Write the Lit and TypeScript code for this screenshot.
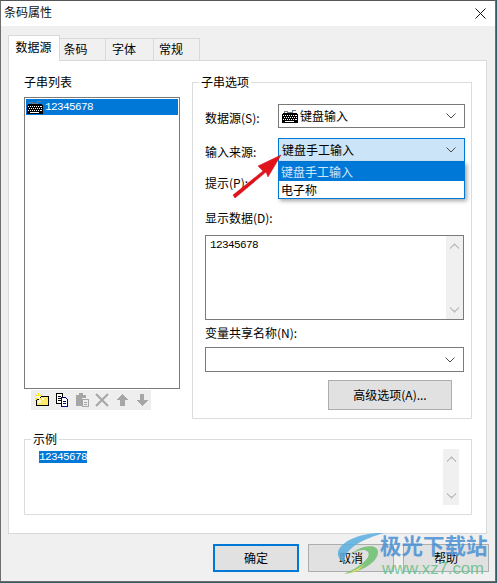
import { LitElement, html, css, svg } from "lit";
import { customElement } from "lit/decorators.js";

const keyboard = svg`<svg class="kb" width="16" height="14" viewBox="0 0 16 14" shape-rendering="crispEdges">
  <path d="M2 4V2h3v1h5V1h4" fill="none" stroke="#6f7d8c" stroke-width="1"/>
  <path d="M1 4h14v1h1v9H0V5h1z" fill="#000"/>
  <path d="M1 6h1v1H1zM3 6h1v1H3zM5 6h1v1H5zM7 6h1v1H7zM9 6h1v1H9zM11 6h1v1h-1zM13 6h2v1h-2zM2 8h1v1H2zM4 8h1v1H4zM6 8h1v1H6zM8 8h1v1H8zM10 8h1v1h-1zM12 8h1v1h-1zM14 8h1v1h-1zM1 10h1v1H1zM3 10h1v1H3zM5 10h1v1H5zM7 10h1v1H7zM9 10h1v1H9zM11 10h1v1h-1zM13 10h2v1h-2zM3 12h9v1H3z" fill="#fff"/>
</svg>`;

const chevron = svg`<svg class="chev" width="10" height="6" viewBox="0 0 10 6"><path d="M0.5 0.5 5 5 9.5 0.5" fill="none" stroke="#4a4a4a" stroke-width="1"/></svg>`;

const sbUp = svg`<svg width="9" height="6" viewBox="0 0 9 6" shape-rendering="crispEdges"><path d="M4 0h1v1h1v1h1v1h1v1h1v2H8V5H7V4H6V3H3v1H2v1H1v1H0V4h1V3h1V2h1V1h1z" fill="#c4c4c4"/></svg>`;
const sbDown = svg`<svg width="9" height="6" viewBox="0 0 9 6" shape-rendering="crispEdges"><path d="M0 0h1v1h1v1h1v1h3V2h1V1h1V0h1v2H8v1H7v1H6v1H5v1H4V5H3V4H2V3H1V2H0z" fill="#c4c4c4"/></svg>`;

@customElement("app-root")
export class AppRoot extends LitElement {
  static styles = css`
    :host {
      display: block;
      width: 497px;
      height: 583px;
      overflow: hidden;
      position: relative;
      background: #2f5f66;
      font-family: "Noto Sans CJK SC", "Liberation Sans", sans-serif;
      font-size: 12px;
      line-height: 16px;
      color: #000;
    }
    .win {
      box-sizing: border-box;
      width: 496px;
      height: 582px;
      background: #f0f0f0;
      border: 1px solid #6e6e6e;
      border-top-color: #555;
      display: flex;
      flex-direction: column;
    }
    .title {
      height: 25px;
      flex: none;
      background: #fff;
      display: flex;
      align-items: center;
      justify-content: space-between;
      padding: 0 9px 0 3px;
      font-size: 12px;
      color: #111;
    }
    .title span { padding-bottom: 3px; }
    .close { display: block; }
    .tabs {
      display: flex;
      align-items: flex-end;
      height: 25px;
      margin: 9px 0 0 7px;
      flex: none;
      position: relative;
      z-index: 1;
    }
    .tab {
      box-sizing: border-box;
      height: 22px;
      border: 1px solid #d9d9d9;
      border-bottom: none;
      border-left: none;
      display: flex;
      align-items: center;
      justify-content: center;
      padding-bottom: 2px;
      background: #f0f0f0;
    }
    .tab.active {
      width: 52px;
      height: 26px;
      background: #fff;
      border-left: 1px solid #d9d9d9;
      padding: 0 1px 4px 0;
      margin-bottom: -1px;
    }
    .tab.t1 { width: 46px; padding-right: 14px; }
    .tab.t2 { width: 48px; padding-right: 11px; }
    .tab.t3 { width: 46px; padding-right: 11px; }
    .panel {
      box-sizing: border-box;
      width: 479px;
      height: 474px;
      margin-left: 7px;
      background: #fff;
      border: 1px solid #d9d9d9;
      padding: 14px 14px 0 15px;
      flex: none;
    }
    .top {
      display: flex;
      gap: 12px;
      height: 344px;
    }
    .left { width: 156px; flex: none; }
    .left .cap { height: 23px; margin-top: -1px; }
    .list {
      box-sizing: border-box;
      height: 292px;
      border: 1px solid #7a7a7a;
      padding: 1px;
    }
    .row {
      height: 16px;
      background: #0078d7;
      color: #fff;
      display: flex;
      align-items: center;
      gap: 2px;
      padding-left: 1px;
    }
    .mono {
      font-family: "Liberation Mono", "DejaVu Sans Mono", monospace;
      font-size: 11px;
      letter-spacing: -0.6px;
    }
    .toolbar {
      margin: 1px 0 0 7px;
      width: 120px;
      height: 20px;
      background: #eeeeee;
      display: flex;
      align-items: center;
      gap: 4px;
      padding-left: 3px;
      box-sizing: border-box;
    }
    .toolbar svg { display: block; flex: none; }
    fieldset {
      margin: 0;
      padding: 0;
      border: 1px solid #dcdcdc;
      min-width: 0;
    }
    legend {
      padding: 0 2px;
      font-size: 12px;
      line-height: 16px;
    }
    .opts legend { margin-left: -6px; }
    .sample legend { margin-left: -8px; }
    .opts {
      box-sizing: border-box;
      width: 281px;
      height: 345px;
      margin-top: -1px;
      padding: 14px 7px 0 12px;
      position: relative;
      align-self: flex-start;
    }
    .field {
      display: grid;
      grid-template-columns: 73px 187px;
      align-items: center;
      height: 24px;
      margin-bottom: 10px;
      white-space: nowrap;
    }
    .field > span { padding-top: 4px; }
    .sel {
      box-sizing: border-box;
      height: 24px;
      border: 1px solid #7a7a7a;
      background: #fff;
      display: flex;
      align-items: center;
      padding: 0 8px 0 3px;
      gap: 2px;
    }
    .sel .txt { flex: 1; }
    .sel.focus {
      border-color: #0078d7;
      background: #cce4f7;
    }
    .hint { height: 22px; margin-top: 2px; line-height: 22px; }
    .lab { height: 16px; line-height: 16px; }
    .lab.data { margin-top: 16px; }
    .lab.shared-lab { margin-top: 5px; }
    .area {
      box-sizing: border-box;
      width: 259px;
      height: 85px;
      margin-top: 9px;
      border: 1px solid #7a7a7a;
      display: flex;
      justify-content: space-between;
      background: #fff;
    }
    .area .mono { padding: 3px 0 0 4px; line-height: 12px; }
    .sb {
      width: 17px;
      background: #f0f0f0;
      flex: none;
      display: flex;
      flex-direction: column;
      justify-content: space-between;
      align-items: center;
      padding: 7px 0 6px;
      box-sizing: border-box;
    }
    .sb svg { display: block; }
    .shared {
      width: 259px;
      margin-top: 6px;
      height: 25px;
    }
    .btn {
      box-sizing: border-box;
      background: #e1e1e1;
      border: 1px solid #adadad;
      display: flex;
      align-items: center;
      justify-content: center;
    }
    .adv-row { display: flex; justify-content: flex-end; padding-right: 12px; margin-top: 8px; }
    .adv { width: 124px; height: 30px; }
    .dropdown {
      position: absolute;
      left: 85px;
      top: 72px;
      width: 187px;
      box-sizing: border-box;
      height: 37px;
      background: #fff;
      border: 1px solid #0078d7;
      border-top: none;
      box-shadow: 2px 2px 4px rgba(0,0,0,.35);
      z-index: 2;
    }
    .dropdown div { height: 18px; line-height: 18px; padding-left: 2px; }
    .dropdown .on { background: #0078d7; color: #cfe6fa; height: 19px; line-height: 20px; }
    .sample {
      box-sizing: border-box;
      width: 448px;
      height: 84px;
      margin-top: 12px;
      padding: 4px 12px 0 14px;
      display: flex;
      justify-content: space-between;
    }
    .sample .sel-text { background: #0078d7; color: #fff; line-height: 12px; height: 12px; align-self: flex-start; }
    .sample .sb { height: 56px; width: 16px; margin-top: -2px; }
    .actions {
      display: flex;
      gap: 9px;
      padding-left: 212px;
      margin-top: 10px;
    }
    .act { width: 86px; height: 28px; }
    .act.def { border: 2px solid #0078d7; }
    .arrow { position: absolute; left: 0; top: 0; z-index: 5; pointer-events: none; }
    .swirl { z-index: 6; opacity: .85; }
    .wm {
      position: absolute;
      left: 380px;
      top: 531px;
      z-index: 6;
      pointer-events: none;
      opacity: .86;
    }
    .wm .cn {
      font-size: 21.5px;
      line-height: 28px;
      font-weight: 700;
      color: #4a90d4;
      white-space: nowrap;
    }
    .wm .en {
      font-family: "Liberation Sans", sans-serif;
      font-size: 16.7px;
      line-height: 20px;
      color: #66c08a;
      white-space: nowrap;
      padding-left: 2px;
    }
  `;

  render() {
    return html`
      <div class="win">
        <div class="title">
          <span>条码属性</span>
          <svg class="close" width="11" height="11" viewBox="0 0 11 11"><path d="M.5.5l10 10M10.5.5l-10 10" stroke="#111" stroke-width="1"/></svg>
        </div>
        <div class="tabs">
          <div class="tab active">数据源</div>
          <div class="tab t1">条码</div>
          <div class="tab t2">字体</div>
          <div class="tab t3">常规</div>
        </div>
        <div class="panel">
          <div class="top">
            <div class="left">
              <div class="cap">子串列表</div>
              <div class="list">
                <div class="row">${keyboard}<span class="mono">12345678</span></div>
              </div>
              <div class="toolbar">
                <svg width="16" height="16" viewBox="0 0 16 16" shape-rendering="crispEdges">
                  <path d="M7.500 4.500h7v9h-12v-5z" fill="#ffe96a" stroke="#000"/>
                  <path d="M1 2l3 3M4 1v3M8 2L5 5M1 6h3M1 9l3-3" stroke="#f2e000" fill="none"/>
                  <path d="M3 4h3v3H3zM4 8h3v3H4zM8 6h2v2H8z" fill="#fffbc8"/>
                </svg>
                <svg width="16" height="16" viewBox="0 0 16 16" shape-rendering="crispEdges">
                  <path d="M2.500 1.500h6v10h-6z" fill="#fff" stroke="#000"/>
                  <path d="M4 4h3M4 6h3M4 8h3" stroke="#000"/>
                  <path d="M7.500 5.500h4l2 2v7h-6z" fill="#fff" stroke="#000080"/>
                  <path d="M9 9h3M9 11h3" stroke="#000080"/>
                </svg>
                <svg width="16" height="16" viewBox="0 0 16 16" shape-rendering="crispEdges">
                  <path d="M2 3h3V1h4v2h3v3H8v8H2z" fill="#a6a6a6"/>
                  <path d="M8.500 7.500h6v7h-6z" fill="#eee" stroke="#a6a6a6"/>
                  <path d="M10 10h3M10 12h3" stroke="#a6a6a6"/>
                </svg>
                <svg width="16" height="16" viewBox="0 0 16 16">
                  <path d="M2 2l12 12M14 2L2 14" stroke="#a6a6a6" stroke-width="2"/>
                </svg>
                <svg width="16" height="16" viewBox="0 0 16 16" shape-rendering="crispEdges">
                  <path d="M8 2l6 6h-3v6H6V8H2z" fill="#a6a6a6"/>
                </svg>
                <svg width="16" height="16" viewBox="0 0 16 16" shape-rendering="crispEdges">
                  <path d="M6 2h4v6h4l-6 6-6-6h4z" fill="#a6a6a6"/>
                </svg>
              </div>
            </div>
            <fieldset class="opts">
              <legend>子串选项</legend>
              <div class="field">
                <span>数据源(S):</span>
                <div class="sel">${keyboard}<span class="txt">键盘输入</span>${chevron}</div>
              </div>
              <div class="field">
                <span>输入来源:</span>
                <div class="sel focus"><span class="txt">键盘手工输入</span>${chevron}</div>
              </div>
              <div class="hint">提示(P):</div>
              <div class="lab data">显示数据(D):</div>
              <div class="area">
                <span class="mono">12345678</span>
                <div class="sb">${sbUp}${sbDown}</div>
              </div>
              <div class="lab shared-lab">变量共享名称(N):</div>
              <div class="sel shared">
                <span class="txt"></span>${chevron}
              </div>
              <div class="adv-row"><div class="btn adv">高级选项(A)...</div></div>
              <div class="dropdown">
                <div class="on">键盘手工输入</div>
                <div>电子称</div>
              </div>
            </fieldset>
          </div>
          <fieldset class="sample">
            <legend>示例</legend>
            <span class="mono sel-text">12345678</span>
            <div class="sb">${sbUp}${sbDown}</div>
          </fieldset>
        </div>
        <div class="actions">
          <div class="btn act def">确定</div>
          <div class="btn act">取消</div>
          <div class="btn act">帮助</div>
        </div>
      </div>

      <svg class="arrow" width="497" height="583" viewBox="0 0 497 583">
        <path d="M281 155 L258 166 L263 171 L233 195 L235 198 L266 172 L268 177 Z" fill="#e1141c" stroke="#c8101a" stroke-width=".5"/>
      </svg>

      <svg class="arrow swirl" width="497" height="583" viewBox="0 0 497 583">
        <path d="M384 533 C360 532 340 542 338 552 C337 558 342 562 345 563 C342 555 352 542 384 533 Z" fill="#5aaee0"/>
        <path d="M350 555 C362 544 378 544 378 552 C378 562 362 572 344 574 C358 568 372 558 368 552 C364 548 356 551 350 555 Z" fill="#6cc070"/>
        <path d="M344 574 C352 572 360 568 366 562 L358 571 Z" fill="#e6d850"/>
      </svg>
      <div class="wm">
        <div class="cn">极光下载站</div>
        <div class="en">www.xz7.com</div>
      </div>
    `;
  }
}
